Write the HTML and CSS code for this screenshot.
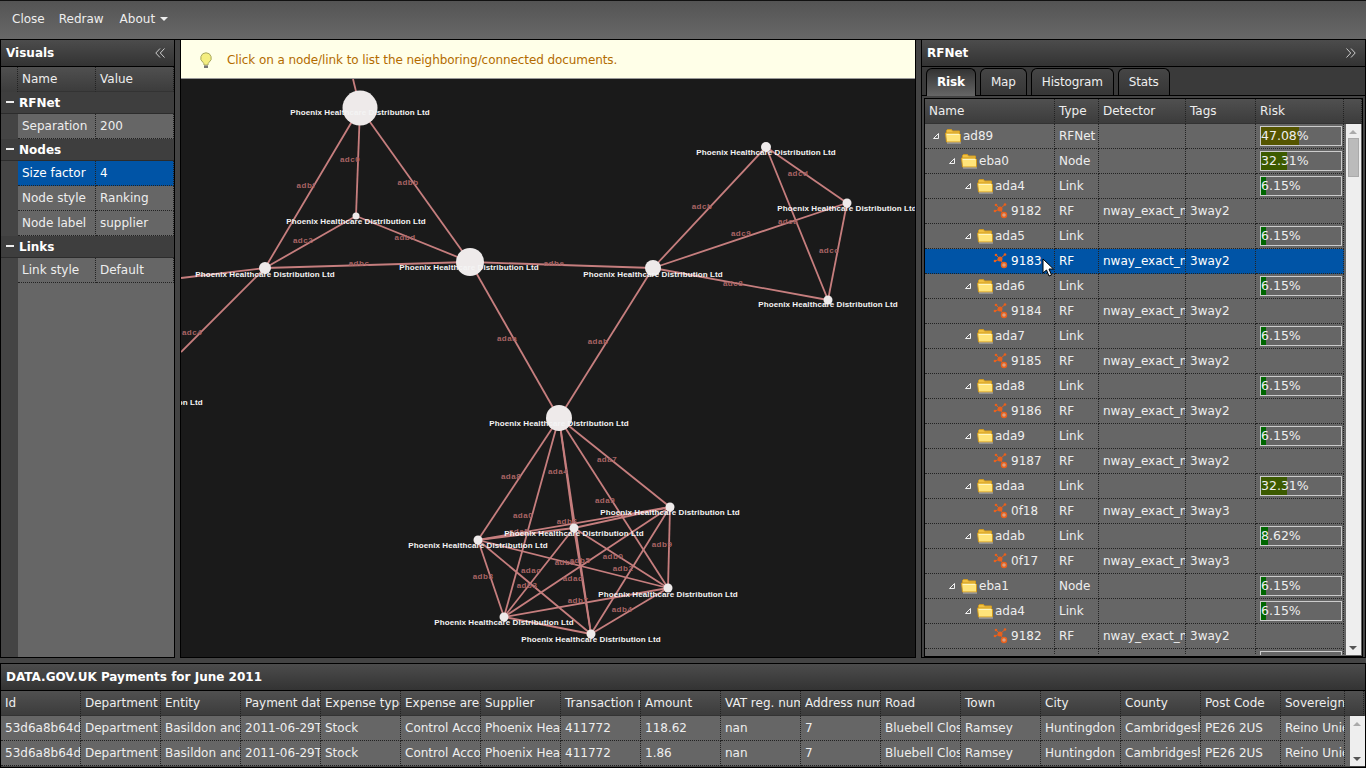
FILE: index.html
```html
<!DOCTYPE html>
<html lang="en">
<head>
    <meta charset="UTF-8">
    <title>RFNet Visuals</title>
    <link rel="stylesheet" href="styles.css">
</head>
<body>
    <svg class="sprites" width="0" height="0">
        <symbol id="folder" viewBox="0 0 16 16">
            <path d="M1.500 5V2.500l1-1h4l1 1.500H14.500v8" fill="#f0c040" stroke="#d09a20"/>
            <path d="M.5 5h13.500l1.500 1.500v7.500H1.500z" fill="#ffe47a" stroke="#d09a20"/>
            <path d="M1.800 6.500h12.400" stroke="#fff6c0"/>
            <path d="M2 15h14.500V8" fill="none" stroke="#d8d8d8" stroke-opacity=".7"/>
        </symbol>
        <symbol id="tri" viewBox="0 0 6 6">
            <path d="M.5 5.500 5.500.5v5z" fill="none" stroke="#f0f0f0"/>
        </symbol>
        <symbol id="net" viewBox="0 0 16 16">
            <path d="M7 6 2 8M7 6 3 2M7 6 12 1.500M7 6 11 12" stroke="#e8601c"/>
            <circle cx="7" cy="6" r="2.500" fill="#e8601c"/>
            <circle cx="2" cy="8" r="1.300" fill="#e8601c"/>
            <circle cx="3" cy="2" r="1.300" fill="#e8601c"/>
            <circle cx="12" cy="1.500" r="1.300" fill="#e8601c"/>
            <circle cx="11" cy="12" r="2.500" fill="#d9a080" stroke="#e8601c" stroke-width="1.400"/>
        </symbol>
    </svg>

    <div class="topbar">
        <span class="menu-item">Close</span>
        <span class="menu-item">Redraw</span>
        <span class="menu-item about">About <i class="caret"></i></span>
    </div>

    <div class="main">
        <div class="panel visuals">
            <div class="panel-title">
                <span>Visuals</span>
                <svg class="collapse" width="10" height="10" viewBox="0 0 10 10"><path d="M5 .5.8 5 5 9.500M9.500.5 5.300 5l4.200 4.500" fill="none" stroke="#ccc"/></svg>
            </div>
            <table class="props">
                <tr class="props-head"><th class="gutter"></th><th>Name</th><th>Value</th></tr>
                <tr class="group"><td colspan="3"><i class="minus"></i>RFNet</td></tr>
                <tr><td class="gutter"></td><td>Separation</td><td>200</td></tr>
                <tr class="group"><td colspan="3"><i class="minus"></i>Nodes</td></tr>
                <tr class="selected"><td class="gutter"></td><td>Size factor</td><td>4</td></tr>
                <tr><td class="gutter"></td><td>Node style</td><td>Ranking</td></tr>
                <tr><td class="gutter"></td><td>Node label</td><td>supplier</td></tr>
                <tr class="group"><td colspan="3"><i class="minus"></i>Links</td></tr>
                <tr><td class="gutter"></td><td>Link style</td><td>Default</td></tr>
            </table>
        </div>

        <div class="center">
            <div class="notice">
                <svg class="bulb" width="14" height="17" viewBox="0 0 14 17">
                    <path d="M7 .8a5.200 5.200 0 0 0-3 9.500c.8.700 1 1.700 1 2.700h4c0-1 .2-2 1-2.700A5.200 5.200 0 0 0 7 .8z" fill="#f4ee80" stroke="#a8a860"/>
                    <path d="M5 13.500h4v2.500H5z" fill="#777"/>
                </svg>
                <span>Click on a node/link to list the neighboring/connected documents.</span>
            </div>
            <svg class="graph" width="734" height="578" viewBox="181 79 734 578">
                <g class="links">
                    <line x1="353" y1="79" x2="360" y2="108"/>
                    <line x1="360" y1="108" x2="265" y2="268"/>
                    <line x1="360" y1="108" x2="356" y2="216"/>
                    <line x1="360" y1="108" x2="470" y2="262"/>
                    <line x1="356" y1="216" x2="265" y2="268"/>
                    <line x1="356" y1="216" x2="470" y2="262"/>
                    <line x1="265" y1="268" x2="470" y2="262"/>
                    <line x1="265" y1="268" x2="181" y2="278"/>
                    <line x1="265" y1="268" x2="181" y2="352"/>
                    <line x1="470" y1="262" x2="653" y2="268"/>
                    <line x1="470" y1="262" x2="559" y2="418"/>
                    <line x1="653" y1="268" x2="559" y2="418"/>
                    <line x1="653" y1="268" x2="766" y2="147"/>
                    <line x1="653" y1="268" x2="847" y2="203"/>
                    <line x1="653" y1="268" x2="828" y2="300"/>
                    <line x1="766" y1="147" x2="847" y2="203"/>
                    <line x1="766" y1="147" x2="828" y2="300"/>
                    <line x1="847" y1="203" x2="828" y2="300"/>
                    <line x1="559" y1="418" x2="670" y2="507"/>
                    <line x1="559" y1="418" x2="574" y2="528"/>
                    <line x1="559" y1="418" x2="478" y2="540"/>
                    <line x1="559" y1="418" x2="668" y2="588"/>
                    <line x1="559" y1="418" x2="504" y2="617"/>
                    <line x1="559" y1="418" x2="591" y2="634"/>
                    <line x1="670" y1="507" x2="574" y2="528"/>
                    <line x1="670" y1="507" x2="478" y2="540"/>
                    <line x1="670" y1="507" x2="668" y2="588"/>
                    <line x1="670" y1="507" x2="504" y2="617"/>
                    <line x1="670" y1="507" x2="591" y2="634"/>
                    <line x1="574" y1="528" x2="478" y2="540"/>
                    <line x1="574" y1="528" x2="668" y2="588"/>
                    <line x1="574" y1="528" x2="504" y2="617"/>
                    <line x1="574" y1="528" x2="591" y2="634"/>
                    <line x1="478" y1="540" x2="668" y2="588"/>
                    <line x1="478" y1="540" x2="504" y2="617"/>
                    <line x1="478" y1="540" x2="591" y2="634"/>
                    <line x1="668" y1="588" x2="504" y2="617"/>
                    <line x1="668" y1="588" x2="591" y2="634"/>
                    <line x1="504" y1="617" x2="591" y2="634"/>
                </g>
                <g class="link-labels">
                    <text x="350" y="162">adc0</text>
                    <text x="306" y="188">adbf</text>
                    <text x="408" y="185">adbb</text>
                    <text x="303" y="243">adc2</text>
                    <text x="405" y="240">adbd</text>
                    <text x="359" y="266">adbc</text>
                    <text x="554" y="266">adbe</text>
                    <text x="702" y="209">adcb</text>
                    <text x="741" y="236">adc9</text>
                    <text x="798" y="176">adcd</text>
                    <text x="788" y="224">adca</text>
                    <text x="829" y="253">adcc</text>
                    <text x="733" y="286">adc8</text>
                    <text x="507" y="341">adaa</text>
                    <text x="598" y="344">adab</text>
                    <text x="192" y="335">adc4</text>
                    <text x="511" y="479">ada8</text>
                    <text x="558" y="474">ada4</text>
                    <text x="607" y="462">ada7</text>
                    <text x="605" y="503">ada9</text>
                    <text x="523" y="518">ada0</text>
                    <text x="519" y="534">ada5</text>
                    <text x="567" y="524">adb6</text>
                    <text x="483" y="579">adb8</text>
                    <text x="531" y="573">adac</text>
                    <text x="527" y="588">adb3</text>
                    <text x="565" y="565">adba</text>
                    <text x="580" y="563">adb5</text>
                    <text x="573" y="581">adad</text>
                    <text x="613" y="559">adb0</text>
                    <text x="623" y="571">adb2</text>
                    <text x="662" y="547">adb9</text>
                    <text x="578" y="603">adb7</text>
                    <text x="622" y="612">adb4</text>
                </g>
                <g class="nodes">
                    <circle cx="360" cy="108" r="17.500"/>
                    <circle cx="356" cy="216" r="3.500"/>
                    <circle cx="265" cy="268" r="6"/>
                    <circle cx="470" cy="262" r="14"/>
                    <circle cx="653" cy="268" r="8"/>
                    <circle cx="766" cy="147" r="5"/>
                    <circle cx="847" cy="203" r="4.500"/>
                    <circle cx="828" cy="300" r="4.500"/>
                    <circle cx="559" cy="418" r="13"/>
                    <circle cx="670" cy="507" r="4.500"/>
                    <circle cx="574" cy="528" r="4.500"/>
                    <circle cx="478" cy="540" r="4.500"/>
                    <circle cx="668" cy="588" r="4.500"/>
                    <circle cx="504" cy="617" r="4.500"/>
                    <circle cx="591" cy="634" r="4.500"/>
                </g>
                <g class="node-labels">
                    <text x="360" y="115">Phoenix Healthcare Distribution Ltd</text>
                    <text x="356" y="224">Phoenix Healthcare Distribution Ltd</text>
                    <text x="265" y="277">Phoenix Healthcare Distribution Ltd</text>
                    <text x="469" y="270">Phoenix Healthcare Distribution Ltd</text>
                    <text x="653" y="277">Phoenix Healthcare Distribution Ltd</text>
                    <text x="766" y="155">Phoenix Healthcare Distribution Ltd</text>
                    <text x="847" y="211">Phoenix Healthcare Distribution Ltd</text>
                    <text x="828" y="307">Phoenix Healthcare Distribution Ltd</text>
                    <text x="133" y="405">Phoenix Healthcare Distribution Ltd</text>
                    <text x="559" y="426">Phoenix Healthcare Distribution Ltd</text>
                    <text x="670" y="515">Phoenix Healthcare Distribution Ltd</text>
                    <text x="574" y="536">Phoenix Healthcare Distribution Ltd</text>
                    <text x="478" y="548">Phoenix Healthcare Distribution Ltd</text>
                    <text x="668" y="597">Phoenix Healthcare Distribution Ltd</text>
                    <text x="504" y="625">Phoenix Healthcare Distribution Ltd</text>
                    <text x="591" y="642">Phoenix Healthcare Distribution Ltd</text>
                </g>
            </svg>
        </div>

        <div class="panel rfnet">
            <div class="panel-title">
                <span>RFNet</span>
                <svg class="collapse" width="10" height="10" viewBox="0 0 10 10"><path d="M.5.5 4.700 5 .5 9.500M5 .5 9.200 5 5 9.500" fill="none" stroke="#ccc"/></svg>
            </div>
            <div class="tabs">
                <span class="tab active">Risk</span>
                <span class="tab">Map</span>
                <span class="tab">Histogram</span>
                <span class="tab">Stats</span>
            </div>
            <div class="tab-body">
                <div class="tree">
                    <table class="grid tree-head">
                        <tr><th class="c-name">Name</th><th class="c-type">Type</th><th class="c-det">Detector</th><th class="c-tags">Tags</th><th class="c-risk">Risk</th><th></th></tr>
                    </table>
                    <div class="tree-body">
                        <table class="grid tree-rows">
                            <tr><td class="c-name"><div class="node l0"><svg class="tw"><use href="#tri"/></svg><svg class="ic"><use href="#folder"/></svg>ad89</div></td><td class="c-type">RFNet</td><td class="c-det"></td><td class="c-tags"></td><td class="c-risk"><div class="bar"><div class="fill olive" style="width:47.08%"></div><span>47.08%</span></div></td></tr>
                            <tr><td class="c-name"><div class="node l1"><svg class="tw"><use href="#tri"/></svg><svg class="ic"><use href="#folder"/></svg>eba0</div></td><td class="c-type">Node</td><td class="c-det"></td><td class="c-tags"></td><td class="c-risk"><div class="bar"><div class="fill moss" style="width:32.31%"></div><span>32.31%</span></div></td></tr>
                            <tr><td class="c-name"><div class="node l2"><svg class="tw"><use href="#tri"/></svg><svg class="ic"><use href="#folder"/></svg>ada4</div></td><td class="c-type">Link</td><td class="c-det"></td><td class="c-tags"></td><td class="c-risk"><div class="bar"><div class="fill green" style="width:6.15%"></div><span>6.15%</span></div></td></tr>
                            <tr><td class="c-name"><div class="node l3"><svg class="ic"><use href="#net"/></svg>9182</div></td><td class="c-type">RF</td><td class="c-det">nway_exact_match</td><td class="c-tags">3way2</td><td class="c-risk"></td></tr>
                            <tr><td class="c-name"><div class="node l2"><svg class="tw"><use href="#tri"/></svg><svg class="ic"><use href="#folder"/></svg>ada5</div></td><td class="c-type">Link</td><td class="c-det"></td><td class="c-tags"></td><td class="c-risk"><div class="bar"><div class="fill green" style="width:6.15%"></div><span>6.15%</span></div></td></tr>
                            <tr class="selected"><td class="c-name"><div class="node l3"><svg class="ic"><use href="#net"/></svg>9183</div></td><td class="c-type">RF</td><td class="c-det">nway_exact_match</td><td class="c-tags">3way2</td><td class="c-risk"></td></tr>
                            <tr><td class="c-name"><div class="node l2"><svg class="tw"><use href="#tri"/></svg><svg class="ic"><use href="#folder"/></svg>ada6</div></td><td class="c-type">Link</td><td class="c-det"></td><td class="c-tags"></td><td class="c-risk"><div class="bar"><div class="fill green" style="width:6.15%"></div><span>6.15%</span></div></td></tr>
                            <tr><td class="c-name"><div class="node l3"><svg class="ic"><use href="#net"/></svg>9184</div></td><td class="c-type">RF</td><td class="c-det">nway_exact_match</td><td class="c-tags">3way2</td><td class="c-risk"></td></tr>
                            <tr><td class="c-name"><div class="node l2"><svg class="tw"><use href="#tri"/></svg><svg class="ic"><use href="#folder"/></svg>ada7</div></td><td class="c-type">Link</td><td class="c-det"></td><td class="c-tags"></td><td class="c-risk"><div class="bar"><div class="fill green" style="width:6.15%"></div><span>6.15%</span></div></td></tr>
                            <tr><td class="c-name"><div class="node l3"><svg class="ic"><use href="#net"/></svg>9185</div></td><td class="c-type">RF</td><td class="c-det">nway_exact_match</td><td class="c-tags">3way2</td><td class="c-risk"></td></tr>
                            <tr><td class="c-name"><div class="node l2"><svg class="tw"><use href="#tri"/></svg><svg class="ic"><use href="#folder"/></svg>ada8</div></td><td class="c-type">Link</td><td class="c-det"></td><td class="c-tags"></td><td class="c-risk"><div class="bar"><div class="fill green" style="width:6.15%"></div><span>6.15%</span></div></td></tr>
                            <tr><td class="c-name"><div class="node l3"><svg class="ic"><use href="#net"/></svg>9186</div></td><td class="c-type">RF</td><td class="c-det">nway_exact_match</td><td class="c-tags">3way2</td><td class="c-risk"></td></tr>
                            <tr><td class="c-name"><div class="node l2"><svg class="tw"><use href="#tri"/></svg><svg class="ic"><use href="#folder"/></svg>ada9</div></td><td class="c-type">Link</td><td class="c-det"></td><td class="c-tags"></td><td class="c-risk"><div class="bar"><div class="fill green" style="width:6.15%"></div><span>6.15%</span></div></td></tr>
                            <tr><td class="c-name"><div class="node l3"><svg class="ic"><use href="#net"/></svg>9187</div></td><td class="c-type">RF</td><td class="c-det">nway_exact_match</td><td class="c-tags">3way2</td><td class="c-risk"></td></tr>
                            <tr><td class="c-name"><div class="node l2"><svg class="tw"><use href="#tri"/></svg><svg class="ic"><use href="#folder"/></svg>adaa</div></td><td class="c-type">Link</td><td class="c-det"></td><td class="c-tags"></td><td class="c-risk"><div class="bar"><div class="fill moss" style="width:32.31%"></div><span>32.31%</span></div></td></tr>
                            <tr><td class="c-name"><div class="node l3"><svg class="ic"><use href="#net"/></svg>0f18</div></td><td class="c-type">RF</td><td class="c-det">nway_exact_match</td><td class="c-tags">3way3</td><td class="c-risk"></td></tr>
                            <tr><td class="c-name"><div class="node l2"><svg class="tw"><use href="#tri"/></svg><svg class="ic"><use href="#folder"/></svg>adab</div></td><td class="c-type">Link</td><td class="c-det"></td><td class="c-tags"></td><td class="c-risk"><div class="bar"><div class="fill green" style="width:8.62%"></div><span>8.62%</span></div></td></tr>
                            <tr><td class="c-name"><div class="node l3"><svg class="ic"><use href="#net"/></svg>0f17</div></td><td class="c-type">RF</td><td class="c-det">nway_exact_match</td><td class="c-tags">3way3</td><td class="c-risk"></td></tr>
                            <tr><td class="c-name"><div class="node l1"><svg class="tw"><use href="#tri"/></svg><svg class="ic"><use href="#folder"/></svg>eba1</div></td><td class="c-type">Node</td><td class="c-det"></td><td class="c-tags"></td><td class="c-risk"><div class="bar"><div class="fill green" style="width:6.15%"></div><span>6.15%</span></div></td></tr>
                            <tr><td class="c-name"><div class="node l2"><svg class="tw"><use href="#tri"/></svg><svg class="ic"><use href="#folder"/></svg>ada4</div></td><td class="c-type">Link</td><td class="c-det"></td><td class="c-tags"></td><td class="c-risk"><div class="bar"><div class="fill green" style="width:6.15%"></div><span>6.15%</span></div></td></tr>
                            <tr><td class="c-name"><div class="node l3"><svg class="ic"><use href="#net"/></svg>9182</div></td><td class="c-type">RF</td><td class="c-det">nway_exact_match</td><td class="c-tags">3way2</td><td class="c-risk"></td></tr>
                            <tr><td class="c-name"></td><td class="c-type"></td><td class="c-det"></td><td class="c-tags"></td><td class="c-risk"><div class="bar"></div></td></tr>
                        </table>
                        <div class="scrollbar">
                            <i class="arrow up"></i>
                            <div class="thumb"></div>
                            <i class="arrow down"></i>
                        </div>
                    </div>
                </div>
            </div>
            <svg class="cursor" width="14" height="20" viewBox="0 0 14 20"><path d="M1 1v14l3.500-3 2.500 6 2.500-1-2.500-6h4.500z" fill="#fff" stroke="#000"/></svg>
        </div>
    </div>

    <div class="panel payments">
        <div class="panel-title"><span>DATA.GOV.UK Payments for June 2011</span></div>
        <table class="grid pay-head">
            <tr><th>Id</th><th>Department</th><th>Entity</th><th>Payment date</th><th>Expense type</th><th>Expense area</th><th>Supplier</th><th>Transaction number</th><th>Amount</th><th>VAT reg. number</th><th>Address number</th><th>Road</th><th>Town</th><th>City</th><th>County</th><th>Post Code</th><th class="last">Sovereign</th><th class="pad"></th></tr>
        </table>
        <div class="pay-body">
            <table class="grid pay-rows">
                <tr><td>53d6a8b64d</td><td>Department</td><td>Basildon and</td><td>2011-06-29T</td><td>Stock</td><td>Control Acco</td><td>Phoenix Hea</td><td>411772</td><td>118.62</td><td>nan</td><td>7</td><td>Bluebell Clos</td><td>Ramsey</td><td>Huntingdon</td><td>Cambridgesh</td><td>PE26 2US</td><td class="last">Reino Unido</td></tr>
                <tr><td>53d6a8b64d</td><td>Department</td><td>Basildon and</td><td>2011-06-29T</td><td>Stock</td><td>Control Acco</td><td>Phoenix Hea</td><td>411772</td><td>1.86</td><td>nan</td><td>7</td><td>Bluebell Clos</td><td>Ramsey</td><td>Huntingdon</td><td>Cambridgesh</td><td>PE26 2US</td><td class="last">Reino Unido</td></tr>
            </table>
            <div class="scrollbar">
                <i class="arrow up"></i>
                <i class="arrow down"></i>
            </div>
        </div>
    </div>
</body>
</html>
```

FILE: styles.css
```css
* {
    box-sizing: border-box;
}
html, body {
    margin: 0;
    height: 100%;
}
body {
    font-family: "DejaVu Sans", sans-serif;
    font-size: 12px;
    color: #eee;
    background: #444;
    overflow: hidden;
}
.sprites {
    position: absolute;
}
.topbar {
    height: 40px;
    display: flex;
    align-items: center;
    gap: 14px;
    padding: 0 12px 2px;
    background: linear-gradient(#545454, #686868);
    border-top: 1px solid #111;
    border-bottom: 1px solid #000;
}
.about {
    margin-left: 2px;
}
.caret {
    display: inline-block;
    margin-left: 1px;
    vertical-align: 2px;
    border-left: 4px solid transparent;
    border-right: 4px solid transparent;
    border-top: 4px solid #eee;
}
.main {
    height: 618px;
    display: flex;
    gap: 5px;
}
.panel {
    border: 1px solid #000;
    border-top: none;
    background: #444;
}
.panel-title {
    height: 27px;
    display: flex;
    align-items: center;
    justify-content: space-between;
    padding: 0 9px 1px 5px;
    font-weight: bold;
    color: #fff;
    background: linear-gradient(#4c4c4c, #333);
    border-bottom: 1px solid #000;
}
.visuals {
    width: 175px;
    margin-left: 0;
    background: linear-gradient(to right, #444 17px, #666 17px);
}
.props {
    width: 173px;
    table-layout: fixed;
    border-collapse: separate;
    border-spacing: 0;
}
.props th, .props td {
    height: 25px;
    padding: 0 4px;
    text-align: left;
    font-weight: normal;
    border-right: 1px dotted #222;
    border-bottom: 1px dotted #222;
    white-space: nowrap;
    overflow: hidden;
}
.props .gutter {
    width: 17px;
    background: #444;
    border-bottom: none;
    border-right: none;
}
.props td {
    background: #666;
}
.props th {
    height: 25px;
    background: linear-gradient(#505050, #3c3c3c);
    border-bottom: 1px solid #333;
}
.props th.gutter {
    background: linear-gradient(#505050, #3c3c3c);
    border-right: 1px dotted #222;
}
.props .group td {
    height: 22px;
    padding: 0 0 0 5px;
    background: #3e3e3e;
    border-right: none;
    border-bottom: 1px solid #2c2c2c;
    font-weight: bold;
    color: #fff;
}
.minus {
    display: inline-block;
    width: 8px;
    height: 2px;
    margin-right: 5px;
    vertical-align: 4px;
    background: #eee;
}
.selected td, .props .selected td {
    background: #0054a6;
    color: #fff;
}
.props .selected .gutter {
    background: #444;
}
.center {
    flex: 1;
    display: flex;
    flex-direction: column;
    border: 1px solid #000;
    border-top: none;
    background: #1a1a1a;
    overflow: hidden;
}
.notice {
    height: 39px;
    display: flex;
    align-items: center;
    gap: 14px;
    padding: 2px 0 0 18px;
    letter-spacing: -.08px;
    color: #b36b00;
    background: #ffffe8;
    border-bottom: 1px solid #999;
}
.graph {
    display: block;
}
.links line {
    stroke: #c67e7e;
    stroke-width: 1.800;
}
.link-labels text {
    font-family: "Liberation Sans", sans-serif;
    font-size: 8px;
    font-weight: bold;
    letter-spacing: .5px;
    fill: #a86464;
    text-anchor: middle;
}
.nodes circle {
    fill: #eeeaea;
}
.node-labels text {
    font-family: "Liberation Sans", sans-serif;
    font-size: 8px;
    font-weight: bold;
    letter-spacing: .1px;
    fill: #f4f4f4;
    text-anchor: middle;
}
.rfnet {
    width: 445px;
    position: relative;
}
.collapse {
    display: block;
}
.tabs {
    height: 29px;
    display: flex;
    align-items: flex-end;
    gap: 4px;
    padding-left: 4px;
    background: #3a3a3a;
    border-bottom: 1px solid #000;
}
.tab {
    height: 27px;
    padding: 6px 10px 0;
    letter-spacing: -.15px;
    border: 1px solid #000;
    border-bottom: none;
    border-radius: 6px 6px 0 0;
    background: linear-gradient(#464646, #363636);
}
.tab.active {
    margin-bottom: -1px;
    height: 28px;
    font-weight: bold;
    color: #fff;
    background: linear-gradient(#333, #666);
}
.tab-body {
    padding: 2px 2px 0;
}
.tree {
    height: 559px;
    border: 1px solid #000;
    background: #666;
    overflow: hidden;
}
.grid {
    table-layout: fixed;
    border-collapse: separate;
    border-spacing: 0;
}
.grid th, .grid td {
    height: 25px;
    padding: 0 0 0 4px;
    text-align: left;
    font-weight: normal;
    white-space: nowrap;
    overflow: hidden;
    border-right: 1px dotted #222;
    border-bottom: 1px dotted #222;
}
.grid th {
    background: linear-gradient(#505050, #3c3c3c);
    border-bottom: 1px solid #333;
}
.grid td {
    background: #666;
}
.grid .selected td {
    background: #0054a6;
}
.tree-head {
    width: 437px;
}
.tree-rows {
    width: 419px;
}
.c-name { width: 130px; }
.c-type { width: 44px; }
.c-det { width: 87px; }
.c-tags { width: 70px; }
.c-risk { width: 88px; }
.tree-body {
    position: relative;
    height: 531px;
    overflow: hidden;
}
.node {
    display: flex;
    align-items: center;
    gap: 2px;
}
.node.l0 { padding-left: 4px; }
.node.l1 { padding-left: 20px; }
.node.l2 { padding-left: 36px; }
.node.l3 { padding-left: 64px; }
.tw {
    width: 6px;
    height: 6px;
    margin-right: 4px;
}
.ic {
    width: 16px;
    height: 16px;
}
.bar {
    position: relative;
    width: 82px;
    height: 20px;
    border: 1px solid #ccc;
    line-height: 18px;
}
.fill {
    position: absolute;
    left: 0;
    top: 0;
    bottom: 0;
}
.bar span {
    position: relative;
    font-size: 12.500px;
}
.olive { background: #555500; }
.moss { background: #3c5a00; }
.green { background: #006600; }
.scrollbar {
    width: 15px;
    position: absolute;
    top: 0;
    right: 1px;
    bottom: 0;
    background: #eee;
}
.thumb {
    position: absolute;
    left: 2px;
    right: 2px;
    top: 14px;
    height: 39px;
    background: #bbb;
    border: 1px solid #aaa;
}
.arrow {
    position: absolute;
    left: 3px;
    border-left: 4px solid transparent;
    border-right: 4px solid transparent;
}
.arrow.up {
    top: 6px;
    border-bottom: 4px solid #aaa;
}
.arrow.down {
    bottom: 5px;
    border-top: 4px solid #555;
}
.cursor {
    position: absolute;
    left: 120px;
    top: 218px;
}
.payments {
    margin-top: 5px;
    height: 105px;
    border-top: 1px solid #000;
}
.pay-head {
    width: 1363px;
}
.pay-head th, .pay-rows td {
    width: 80px;
}
.pay-head .pad {
    width: 19px;
}
.pay-head .last, .pay-rows .last {
    width: 64px;
}
.pay-rows {
    width: 1344px;
}
.pay-body {
    position: relative;
    height: 50px;
    background: #666;
}
.pay-body .scrollbar {
    right: 0;
}
```
